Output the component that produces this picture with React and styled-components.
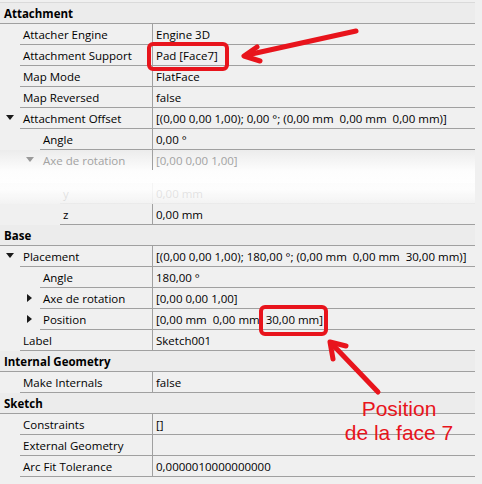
import React from 'react';
import styled, { createGlobalStyle } from 'styled-components';

const Global = createGlobalStyle`
  html, body {
    margin: 0;
    padding: 0;
    background: #f0f0f0;
  }
  body {
    font-family: "Segoe UI", "Open Sans", "Noto Sans", sans-serif;
    font-size: 11.5px;
    color: #000;
  }
`;

const INDENT = 20;
const NAME_COL = 153;

const Wrap = styled.div`
  position: relative;
  width: 482px;
  height: 484px;
  overflow: hidden;
  background: #f0f0f0;
`;

const Panel = styled.div`
  width: 475px;
  margin-top: 2px;
  border-top: 1px solid #dadada;
`;

const GroupHeader = styled.div`
  height: 21px;
  box-sizing: border-box;
  display: flex;
  align-items: center;
  padding-left: 4px;
  font-weight: 700;
  background: #ececec;
  border-bottom: 1px solid #a0a0a0;
`;

const Row = styled.div`
  display: flex;
  height: 21px;
  background: ${p => (p.$faded ? 'linear-gradient(#ececec, #fdfdfd)' : '#f0f0f0')};
  color: ${p => (p.$faded ? '#a2a2a2' : '#000')};
`;

const Indent = styled.div`
  width: ${p => p.$level * INDENT}px;
  flex: none;
  position: relative;
`;

const Toggle = styled.span`
  position: absolute;
  right: 6px;
  top: 7px;
  width: 0;
  height: 0;
  ${p =>
    p.$open
      ? `border-left: 4px solid transparent; border-right: 4px solid transparent; border-top: 5px solid ${p.$faded ? '#9a9a9a' : '#1a1a1a'};`
      : `top: 6px; right: 8px; border-top: 4px solid transparent; border-bottom: 4px solid transparent; border-left: 5px solid #1a1a1a;`}
`;

const Cells = styled.div`
  flex: 1;
  display: flex;
  box-sizing: border-box;
  border-bottom: 1px solid ${p => (p.$faded ? 'transparent' : '#a0a0a0')};
`;

const Name = styled.div`
  width: ${p => NAME_COL - p.$level * INDENT}px;
  flex: none;
  box-sizing: border-box;
  padding-left: 3px;
  display: flex;
  align-items: center;
  border-right: 1px solid #a0a0a0;
  white-space: nowrap;
`;

const Value = styled.div`
  flex: 1;
  padding-left: 3px;
  display: flex;
  align-items: center;
  white-space: pre;
  overflow: hidden;
`;

const FadeBlock = styled.div`
  height: 33px;
  background: linear-gradient(#fdfdfd 0%, #ffffff 55%, #f3f3f3 100%);
  overflow: hidden;
  display: flex;
  flex-direction: column;
  justify-content: flex-end;
`;

const Ghost = styled.div`
  opacity: 0.1;
`;

const RedBox = styled.div`
  position: absolute;
  left: ${p => p.$x}px;
  top: ${p => p.$y}px;
  width: ${p => p.$w}px;
  height: ${p => p.$h}px;
  box-sizing: border-box;
  border: 4px solid #e8141c;
  border-radius: 6px;
`;

const Arrows = styled.svg`
  position: absolute;
  left: 0;
  top: 0;
  pointer-events: none;
`;

const Note = styled.div`
  position: absolute;
  left: 334px;
  top: 397px;
  width: 130px;
  text-align: center;
  font-family: "Liberation Sans", Arial, sans-serif;
  font-size: 21px;
  line-height: 24px;
  color: #e8141c;
`;

const Prop = ({ level = 1, name, value, toggle, faded }) => (
  <Row $faded={faded}>
    <Indent $level={level}>
      {toggle && <Toggle $open={toggle === 'open'} $faded={faded} />}
    </Indent>
    <Cells $faded={faded}>
      <Name $level={level}>{name}</Name>
      <Value>{value}</Value>
    </Cells>
  </Row>
);

export default function App() {
  return (
    <Wrap>
      <Global />
      <Panel>
        <GroupHeader>Attachment</GroupHeader>
        <Prop name="Attacher Engine" value="Engine 3D" />
        <Prop name="Attachment Support" value="Pad [Face7]" />
        <Prop name="Map Mode" value="FlatFace" />
        <Prop name="Map Reversed" value="false" />
        <Prop
          name="Attachment Offset"
          toggle="open"
          value="[(0,00 0,00 1,00); 0,00 °; (0,00 mm  0,00 mm  0,00 mm)]"
        />
        <Prop level={2} name="Angle" value="0,00 °" />
        <Prop level={2} name="Axe de rotation" toggle="open" faded value="[0,00 0,00 1,00]" />
        <FadeBlock>
          <Ghost>
            <Prop level={3} name="y" value="0,00 mm" />
          </Ghost>
        </FadeBlock>
        <Prop level={3} name="z" value="0,00 mm" />

        <GroupHeader>Base</GroupHeader>
        <Prop
          name="Placement"
          toggle="open"
          value="[(0,00 0,00 1,00); 180,00 °; (0,00 mm  0,00 mm  30,00 mm)]"
        />
        <Prop level={2} name="Angle" value="180,00 °" />
        <Prop level={2} name="Axe de rotation" toggle="closed" value="[0,00 0,00 1,00]" />
        <Prop level={2} name="Position" toggle="closed" value="[0,00 mm  0,00 mm  30,00 mm]" />
        <Prop name="Label" value="Sketch001" />

        <GroupHeader>Internal Geometry</GroupHeader>
        <Prop name="Make Internals" value="false" />

        <GroupHeader>Sketch</GroupHeader>
        <Prop name="Constraints" value="[]" />
        <Prop name="External Geometry" value="" />
        <Prop name="Arc Fit Tolerance" value="0,0000010000000000" />
      </Panel>

      <RedBox $x={147} $y={42} $w={82} $h={29} />
      <RedBox $x={259} $y={305} $w={69} $h={31} />

      <Arrows width="482" height="484" viewBox="0 0 482 484">
        <g stroke="#e8141c" strokeWidth="5" fill="none" strokeLinecap="round" strokeLinejoin="round">
          <line x1="356" y1="31" x2="247" y2="55" />
          <polyline points="257,47 244,56 260,61" />
          <line x1="378" y1="392" x2="332" y2="344" />
          <polyline points="333,359 330,342 346,346" />
        </g>
      </Arrows>

      <Note>
        Position
        <br />
        de la face 7
      </Note>
    </Wrap>
  );
}
